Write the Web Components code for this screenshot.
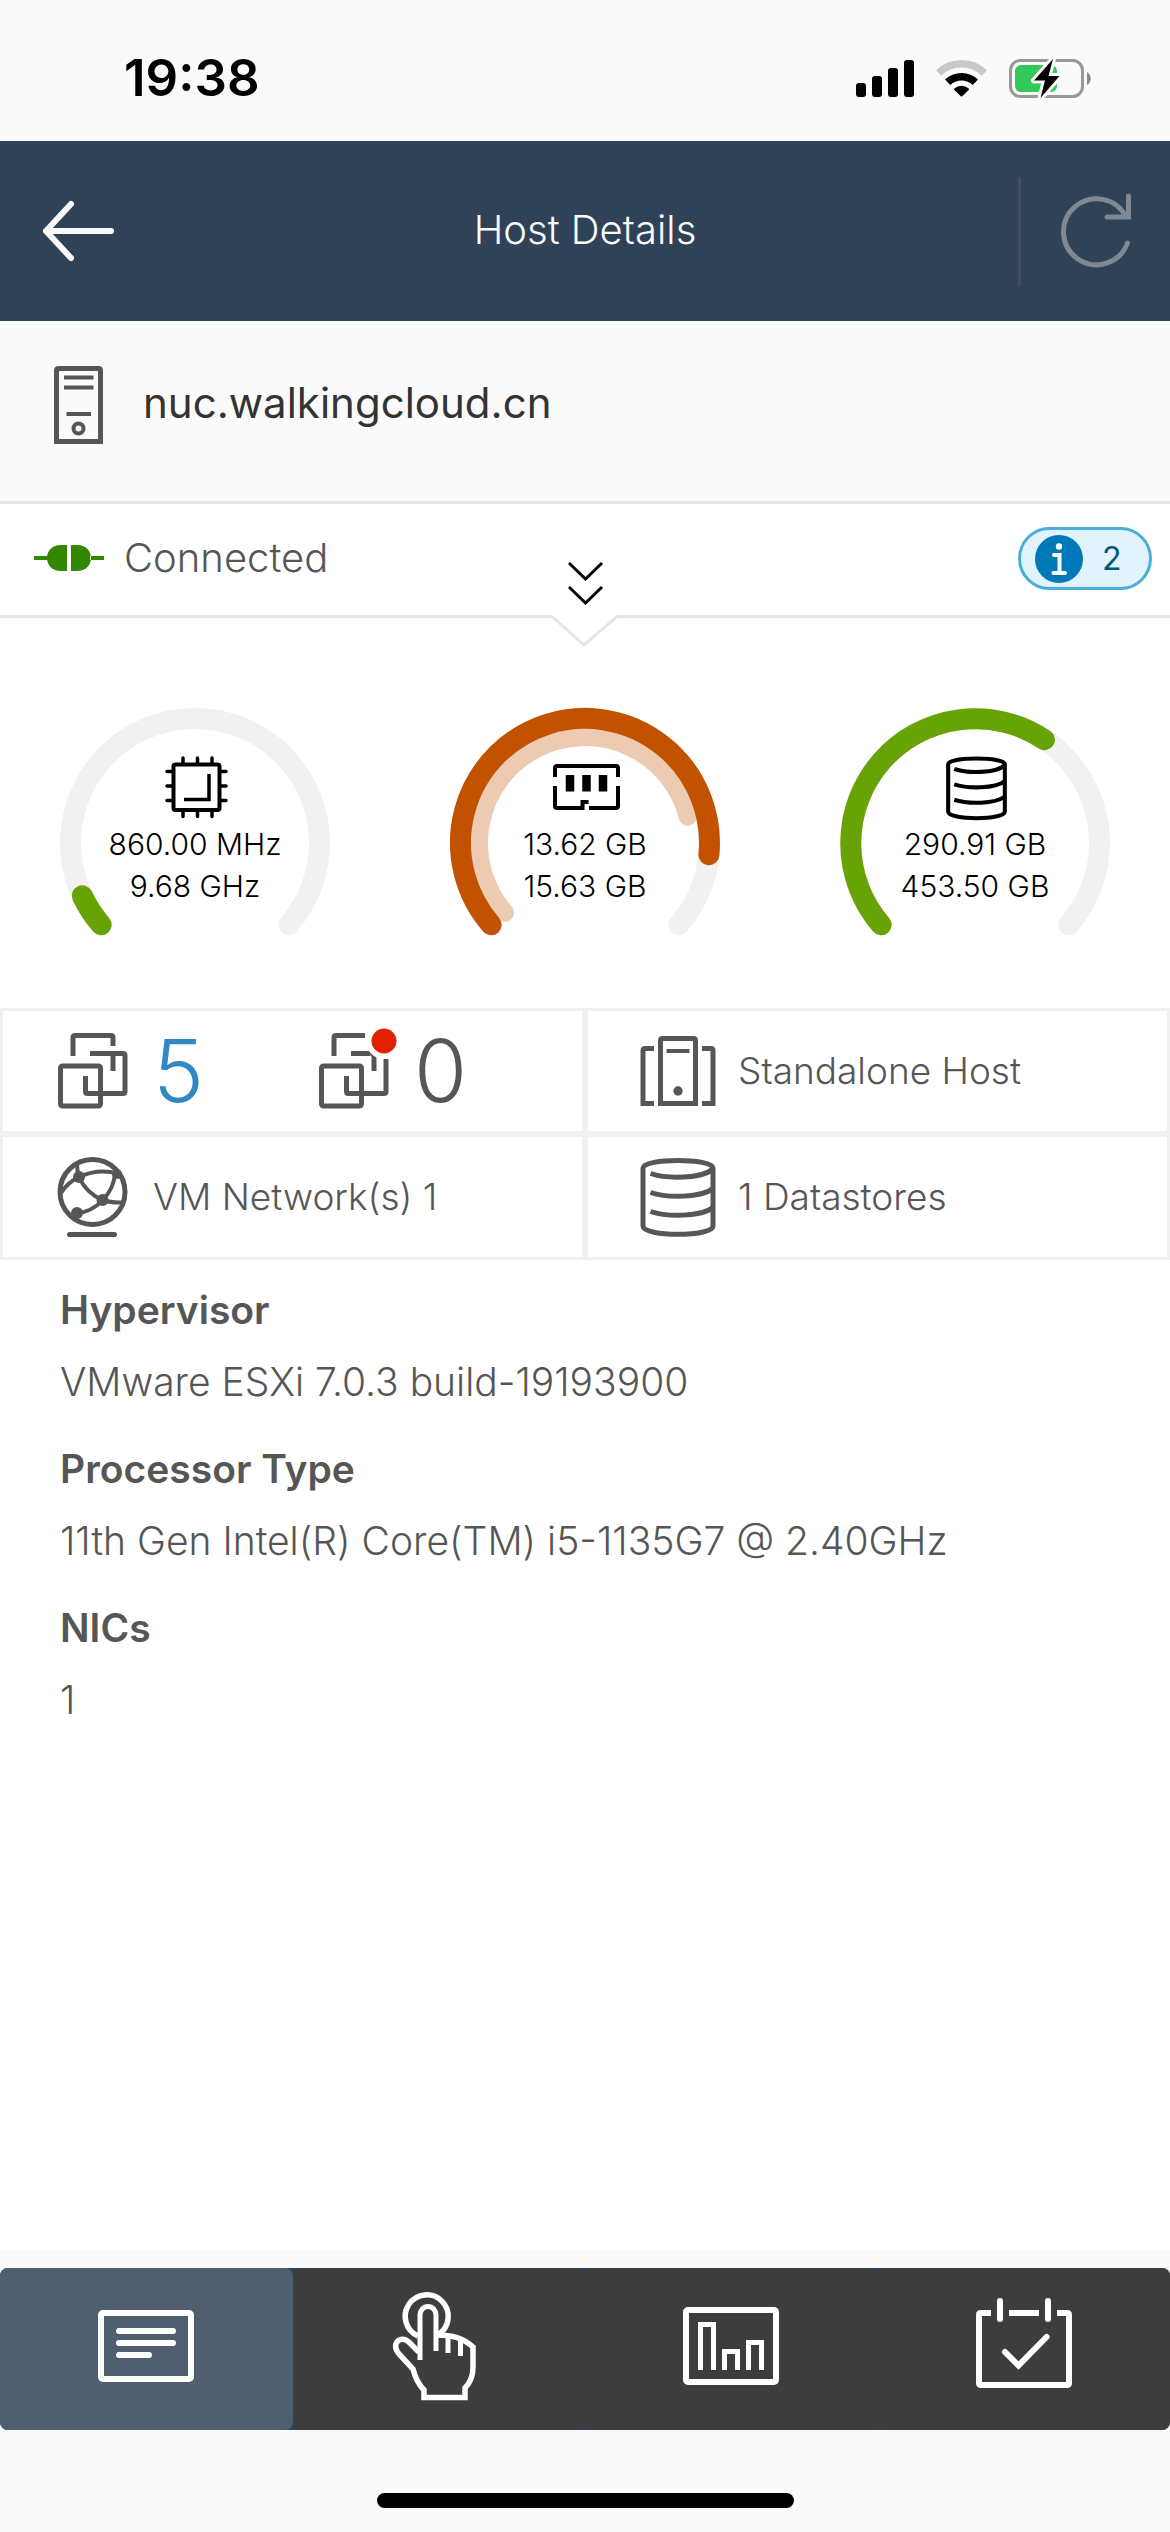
<!DOCTYPE html>
<html lang="en">
<head>
<meta charset="utf-8">
<meta name="viewport" content="width=device-width, initial-scale=1">
<title>Host Details</title>
<style>
  html, body { margin: 0; min-height: 100%; }
  body {
    display: flex; min-height: 100vh; background: #fafafa;
    font-family: Inter, "Open Sans", "Liberation Sans", sans-serif;
    font-size: 39px; line-height: 48px; font-weight: 350; color: #565656;
  }
  host-details-page { flex: 1; }
</style>
</head>
<body>
<host-details-page></host-details-page>

<script>
const define = (name, html, setup) => {
  const template = document.createElement('template');
  template.innerHTML = '<style>*{box-sizing:border-box}svg{display:block;flex:none;overflow:visible}button,a{font:inherit;color:inherit;background:none;border:0;padding:0;text-decoration:none}</style>' + html;
  customElements.define(name, class extends HTMLElement {
    connectedCallback() {
      if (this.shadowRoot) return;
      this.attachShadow({ mode: 'open' }).append(template.content.cloneNode(true));
      if (setup) setup(this, this.shadowRoot);
    }
  });
};

const stroke = 'fill="none" stroke="currentColor"';
const database = (w, h) => `<svg width="${w}" height="${h}" viewBox="0 0 78 84" ${stroke} stroke-width="5">
  <path d="M4 13C4 3 74 3 74 13V71C74 82 4 82 4 71Z" stroke-linejoin="round"/>
  <path d="M11.500 18.500C28 24 62 24 74 14M11.500 37.500C28 43 62 43 74 33.500M11.500 56.500C28 62 62 62 74 52.500"/></svg>`;
const icons = {
  cpu: `<svg width="72" height="66" viewBox="0 0 72 66" ${stroke} stroke-width="4">
    <rect x="14.500" y="10.500" width="46" height="45.500" rx="2"/>
    <path d="M25 45.500H50V20" stroke-width="3.500"/>
    <path d="M24 9V4M38.500 9V4M53 9V4M24 57V62.500M38.500 57V62.500M53 57V62.500M13 17.500H8M13 32H8M13 46.500H8M62 17.500H67M62 32H67M62 46.500H67" stroke-width="3.500" stroke-linecap="round"/></svg>`,
  memory: `<svg width="72" height="66" viewBox="0 0 72 66" ${stroke} stroke-width="4">
    <path d="M6 23V14Q6 12 8 12H67Q69 12 69 14V23M6 32V52Q6 54 8 54H33.500V48H39.500M40 54H67Q69 54 69 52V32"/>
    <path d="M21 21V37.500M37.500 21V37.500M54 21V37.500" stroke-width="8.500"/></svg>`,
  disk: `<div style="padding-left:3px">${database(65, 68)}</div>`,
  datastore: database(78, 84),
  vm: `<svg width="72" height="78" viewBox="0 0 72 78" ${stroke} stroke-width="5">
    <path d="M16 24V5.500Q16 3.500 18 3.500H54Q56 3.500 56 5.500V14M56 21V39"/>
    <path d="M33 21.500H66Q68 21.500 68 23.500V59.500Q68 61.500 66 61.500H30.500Q28.500 61.500 28.500 59.500V44"/>
    <rect x="3.500" y="34" width="40" height="40" rx="2"/></svg>`,
  'vm-alert': `<svg width="72" height="78" viewBox="0 0 72 78" ${stroke} stroke-width="5">
    <path d="M16 24V5.500Q16 3.500 18 3.500H47M33 21.500H52M56 24V39M53 20L57 25"/>
    <path d="M68 27V59.500Q68 61.500 66 61.500H30.500Q28.500 61.500 28.500 59.500V44"/>
    <rect x="3.500" y="34" width="40" height="40" rx="2"/>
    <circle cx="66" cy="9" r="18" fill="#fff" stroke="none"/>
    <circle cx="66" cy="9" r="12.500" fill="#e12200" stroke="none"/></svg>`,
  network: `<svg width="72" height="84" viewBox="0 0 72 84" ${stroke} stroke-width="4">
    <circle cx="35.500" cy="37" r="32.500" stroke-width="5"/>
    <path d="M20 8Q20 16 22 22M4 38Q10 28 22 22Q42 13 61 19M22 22Q29 38 45.500 45Q57 34 58 18M45.500 45Q54 48 66 47.500M20 58Q35 57 45.500 45"/>
    <g fill="currentColor" stroke="none"><circle cx="22" cy="22" r="6"/><circle cx="45.500" cy="45" r="6"/><circle cx="20" cy="58" r="6"/><circle cx="60" cy="19" r="5"/></g>
    <path d="M12.500 79.500H57.500" stroke-width="5" stroke-linecap="round"/></svg>`,
  hosts: `<svg width="78" height="84" viewBox="0 0 78 84" ${stroke} stroke-width="5">
    <path d="M15 19.500H6Q4 19.500 4 21.500V74.500H15M63 19.500H72Q74 19.500 74 21.500V74.500H63"/>
    <path d="M21.500 74.500V11.500Q21.500 9.500 23.500 9.500H54.500Q56.500 9.500 56.500 11.500V74.500Z"/>
    <path d="M27.500 22H50.500" stroke-width="4"/>
    <circle cx="39" cy="62" r="4.700" fill="currentColor" stroke="none"/></svg>`,
  summary: `<svg width="120" height="120" viewBox="0 0 120 120" ${stroke} stroke-width="6">
    <rect x="15" y="24" width="90" height="66" rx="2"/>
    <path d="M33 42H87M33 54H87M33 66H63" stroke-linecap="round"/></svg>`,
  actions: `<svg width="120" height="120" viewBox="0 0 120 120" ${stroke} stroke-width="5.500">
    <path d="M39 47A21.500 21.500 0 1 1 60 45"/>
    <path d="M41 71V26A8 8.500 0 0 1 57 26V62M69 47V64M81.500 51V67" stroke-width="5"/>
    <path d="M57 46C74 46 84 49 94 58V78C94 87 91 94 86 99V108.500H45V101C39 95 36 88 34 80L20 65C12 55 20 48 27 51C31 53 35 59 40 63"/></svg>`,
  performance: `<svg width="120" height="120" viewBox="0 0 120 120" ${stroke} stroke-width="6">
    <rect x="15" y="21" width="90" height="72" rx="2"/>
    <path d="M29.500 81V35.500H42.500V81M53.500 81V62.500H66.500V81M77.500 81V53.500H90.500V81" stroke-width="5"/></svg>`,
  tasks: `<svg width="120" height="120" viewBox="0 0 120 120" ${stroke} stroke-width="6">
    <path d="M27 24H17Q15 24 15 26V94Q15 96 17 96H103Q105 96 105 94V26Q105 24 103 24H93M45 24H75"/>
    <path d="M36 12V30M84 12V30M41 63L54.500 76.500L82.500 48" stroke-linecap="round"/></svg>`
};

define('status-bar', `
  <style>
    :host { display: flex; align-items: center; gap: 22px; height: 141px; padding: 15px 79px 0 124px; color: #000; }
    time { flex: 1; font-size: 51px; line-height: 60px; font-weight: 600; }
  </style>
  <time>19:38</time>
  <svg width="58" height="38" viewBox="0 0 58 38"><rect y="24" width="10" height="14" rx="3"/><rect x="16" y="17" width="10" height="21" rx="3"/><rect x="32" y="9" width="10" height="29" rx="3"/><rect x="48" y="1" width="10" height="37" rx="3"/></svg>
  <svg width="51" height="38" viewBox="0 0 51 38" fill="none" stroke="#000">
    <path d="M2.600 14A33 33 0 0 1 48.400 14" stroke="#c8c8c8" stroke-width="7.500"/>
    <path d="M11.600 23.300A20 20 0 0 1 39.400 23.300" stroke-width="7.500"/>
    <path d="M25.500 36.500L19 30.200A10 10 0 0 1 32 30.200Z" fill="#000" stroke-width="2" stroke-linejoin="round"/></svg>
  <svg width="82" height="40" viewBox="0 0 82 40">
    <rect x="1.500" y="2.500" width="72" height="36" rx="10" fill="none" stroke="#999" stroke-width="3"/>
    <rect x="6" y="7" width="42" height="27" rx="6" fill="#34c759"/>
    <path d="M78 14C83 17 83 24 78 27Z" fill="#8a8a8a"/>
    <path d="M44 1L25 22.500H36L31.500 40L50.500 18H39.500Z" fill="#000" stroke="#fafafa" stroke-width="6" stroke-linejoin="round" paint-order="stroke"/></svg>`);

define('app-header', `
  <style>
    :host { display: grid; grid-template-columns: 152px 1fr 152px; align-items: center; height: 180px; background: #304257; color: #fafafa; }
    h1 { margin: 0; padding-bottom: 3px; text-align: center; font: inherit; font-size: 40px; }
    button { display: grid; place-items: center; height: 108px; }
    .refresh { border-left: 3px solid #405060; color: #7f8894; }
  </style>
  <button aria-label="Back"><svg width="78" height="66" viewBox="0 0 78 66" ${stroke} stroke-width="6" stroke-linecap="round" stroke-linejoin="round"><path d="M74 33H9M34 6L9 33L34 60"/></svg></button>
  <h1><slot></slot></h1>
  <button class="refresh" aria-label="Refresh"><svg width="72" height="78" viewBox="0 0 72 78" ${stroke} stroke-width="5" stroke-linecap="round"><path d="M67.500 51A33 33 0 1 1 66 25M68.500 4V25H47"/></svg></button>`);

define('host-title', `
  <style>
    :host { display: flex; align-items: flex-start; gap: 40px; height: 183px; padding: 45px 54px 0; border-bottom: 3px solid #e6e6e6; background: #fafafa; color: #565656; }
    h2 { margin: 10px 0 0; font-size: 42px; line-height: 54px; font-weight: 400; color: #333; }
  </style>
  <svg width="49" height="78" viewBox="0 0 49 78" ${stroke} stroke-width="5">
    <path d="M2.500 75.500V4.500Q2.500 2.500 4.500 2.500H44.500Q46.500 2.500 46.500 4.500V75.500Z"/>
    <path d="M10 11.500H39.500M10 21.500H39.500M12.500 48H37" stroke-width="4"/><circle cx="24.500" cy="62.500" r="5" stroke-width="4"/></svg>
  <h2><slot></slot></h2>`);

define('connection-row', `
  <style>
    :host { display: grid; grid-template-columns: 1fr auto 1fr; height: 114px; background: #fff; font-size: 40px; }
    .edge { display: flex; border-bottom: 3px solid #e6e6e6; }
    .state { align-items: center; gap: 20px; padding-left: 34px; padding-bottom: 3px; }
    .notices { justify-content: flex-end; align-items: flex-start; padding: 23px 18px 0 0; }
    .expand { align-self: end; height: 82px; }
    .badge { display: flex; align-items: center; gap: 19px; width: 134px; height: 63px; padding: 0 0 0 14px; border: 3px solid #49afd9; border-radius: 32px; background: #e1f3fc; color: #00567a; font-size: 32px; line-height: 40px; font-weight: 400; }
  </style>
  <div class="state edge">
    <svg width="70" height="26" viewBox="0 0 70 26" fill="#318700"><path d="M0 11H14V15H0ZM56 11H70V15H56ZM33 0V26H27C17 26 13 19 13 13S17 0 27 0ZM37 0V26H43C53 26 57 19 57 13S53 0 43 0Z"/></svg>
    <slot></slot>
  </div>
  <button class="expand" aria-label="Show more">
    <svg width="66" height="82" viewBox="0 0 66 82" fill="none">
      <path d="M17 27L33.500 43L50 27M17 51L33.500 67L50 51" stroke="#000" stroke-width="3"/>
      <path d="M0 80.500L32 109L65 80.500" stroke="#e6e6e6" stroke-width="3" stroke-linecap="square"/></svg>
  </button>
  <div class="notices edge"><button class="badge" aria-label="2 notices">
    <svg width="48" height="48" viewBox="0 0 48 48"><circle cx="24" cy="24" r="24" fill="#0079b8"/><circle cx="24" cy="11.500" r="3.200" fill="#fff"/><path d="M19 20H24.500V38M18.500 38H30" fill="none" stroke="#fff" stroke-width="4" stroke-linecap="round"/></svg>
    <slot name="count"></slot>
  </button></div>`);

define('usage-gauge', `
  <style>
    :host { display: grid; flex: 1; justify-items: center; color: #000; font-size: 30px; line-height: 42px; font-weight: 300; }
    .dial, .face { grid-area: 1 / 1; }
    .face { display: flex; flex-direction: column; align-items: center; padding-top: 136px; }
    .glyph { height: 69px; }
  </style>
  <svg class="dial" width="390" height="390" viewBox="0 0 390 390" fill="none" stroke-linecap="round"></svg>
  <div class="face"><div class="glyph"></div><slot></slot></div>`, (el, root) => {
  const arc = (radius, sweep) => {
    const at = deg => [195 + radius * Math.cos(deg * Math.PI / 180), 225 + radius * Math.sin(deg * Math.PI / 180)].map(n => n.toFixed(1)).join(' ');
    return `M${at(138.900)}A${radius} ${radius} 0 ${sweep > 180 ? 1 : 0} 1 ${at(138.900 + sweep)}`;
  };
  const color = el.getAttribute('color');
  const inner = el.getAttribute('inner');
  root.querySelector('.dial').innerHTML =
    `<path d="${arc(124.500, 262.200)}" stroke="#f1f1f1" stroke-width="21"/>` +
    (inner ? `<path d="${arc(106, +inner)}" stroke="#edcbb3" stroke-width="18"/>` : '') +
    `<path d="${arc(124.500, +el.getAttribute('sweep'))}" stroke="${color}" stroke-width="21"/>`;
  root.querySelector('.glyph').innerHTML = icons[el.getAttribute('icon')];
});

define('info-cell', `
  <style>
    :host { display: flex; align-items: center; gap: 24px; height: 120px; padding-left: 54px; background: #fff; font-size: 37px; }
    :host([side="right"]) { gap: 21px; padding-left: 51px; }
    ::slotted(*) { flex: none; }
    ::slotted(vm-count + vm-count) { margin-left: -24px; }
  </style>
  <div class="icon"></div><slot></slot>`, (el, root) => {
  const icon = root.querySelector('.icon');
  if (el.hasAttribute('icon')) icon.innerHTML = icons[el.getAttribute('icon')];
  else icon.remove();
});

define('vm-count', `
  <style>
    :host { display: flex; align-items: center; gap: 24px; width: 237px; font-size: 86px; line-height: 96px; }
    :host([icon="vm"]) a { color: #3089c4; }
  </style>
  <span class="icon"></span><a href="#vms"><slot></slot></a>`, (el, root) => {
  root.querySelector('.icon').innerHTML = icons[el.getAttribute('icon')];
});

define('detail-item', `
  <style>
    :host { display: block; height: 159px; }
    dl { margin: 0; line-height: 72px; }
    dt { font-weight: 600; }
    dd { margin: 0; }
  </style>
  <dl><dt><slot name="label"></slot></dt><dd><slot></slot></dd></dl>`);

define('tab-button', `
  <style>
    :host { flex: 1; display: flex; }
    button { flex: 1; display: grid; place-items: center; height: 162px; border-radius: 8px; background: #3d3d3d; color: #fff; }
    :host([active]) button { background: #4f5f6f; }
  </style>
  <button></button>`, (el, root) => {
  const button = root.querySelector('button');
  button.setAttribute('aria-label', el.getAttribute('label'));
  button.innerHTML = icons[el.getAttribute('icon')];
});

define('tab-bar', `
  <style>
    :host { display: block; padding: 18px 0 24px; background: #fafafa; }
    nav { display: flex; background: #2d4359; border-radius: 8px; }
    .home { width: 417px; height: 15px; margin: 63px auto 0; border-radius: 8px; background: #000; }
  </style>
  <nav><slot></slot></nav><div class="home"></div>`);

define('host-details-page', `
  <style>
    :host { display: flex; flex-direction: column; }
    main { flex: 1; background: #fff; }
    .gauges { display: flex; }
    .grid { display: grid; grid-template-columns: 1fr 1fr; gap: 6px; padding: 3px; background: #f1f1f1; }
    .details { padding: 14px 60px; }
  </style>
  <status-bar></status-bar>
  <app-header>Host Details</app-header>
  <main>
    <host-title>nuc.walkingcloud.cn</host-title>
    <connection-row>Connected<span slot="count">2</span></connection-row>
    <section class="gauges">
      <usage-gauge icon="cpu" color="#68a306" sweep="16"><span>860.00 MHz</span><span>9.68 GHz</span></usage-gauge>
      <usage-gauge icon="memory" color="#c25200" sweep="226.500" inner="206.800"><span>13.62 GB</span><span>15.63 GB</span></usage-gauge>
      <usage-gauge icon="disk" color="#68a306" sweep="165"><span>290.91 GB</span><span>453.50 GB</span></usage-gauge>
    </section>
    <section class="grid">
      <info-cell><vm-count icon="vm">5</vm-count><vm-count icon="vm-alert">0</vm-count></info-cell>
      <info-cell side="right" icon="hosts"><span>Standalone Host</span></info-cell>
      <info-cell icon="network"><span>VM Network(s) 1</span></info-cell>
      <info-cell side="right" icon="datastore"><span>1 Datastores</span></info-cell>
    </section>
    <section class="details">
      <detail-item><span slot="label">Hypervisor</span>VMware ESXi 7.0.3 build-19193900</detail-item>
      <detail-item><span slot="label">Processor Type</span>11th Gen Intel(R) Core(TM) i5-1135G7 @ 2.40GHz</detail-item>
      <detail-item><span slot="label">NICs</span>1</detail-item>
    </section>
  </main>
  <tab-bar>
    <tab-button active icon="summary" label="Summary"></tab-button>
    <tab-button icon="actions" label="Actions"></tab-button>
    <tab-button icon="performance" label="Performance"></tab-button>
    <tab-button icon="tasks" label="Tasks"></tab-button>
  </tab-bar>`);
</script>
</body>
</html>
